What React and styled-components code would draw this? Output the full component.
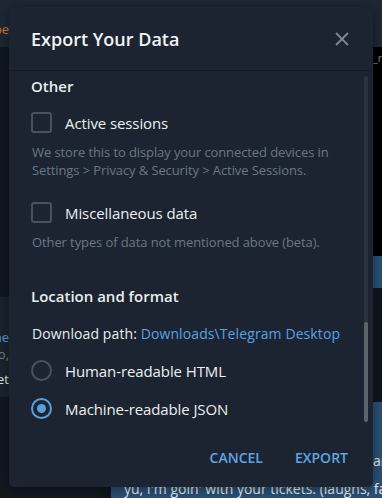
import React from "react"
import styled, { createGlobalStyle } from "styled-components"

const GlobalStyle = createGlobalStyle`
  html, body {
    margin: 0;
    padding: 0;
    background: #0f161e;
  }
  body {
    font-family: "Open Sans", "Noto Sans", sans-serif;
  }
  * {
    box-sizing: border-box;
  }
`

// Backdrop (the app behind the dialog)

const Screen = styled.div`
  position: relative;
  width: 382px;
  height: 498px;
  overflow: hidden;
  display: flex;
  flex-direction: column;
  background: #0f161e;
`

const TopBar = styled.div`
  height: 47px;
  flex-shrink: 0;
  background: #1e2834;
  display: flex;
  align-items: center;
  padding-top: 10px;
`

const Clip = styled.div`
  width: ${(p) => p.$w}px;
  flex-shrink: 0;
  display: flex;
  justify-content: ${(p) => (p.$start ? "flex-start" : "flex-end")};
  overflow: hidden;
  white-space: nowrap;
  color: ${(p) => p.$color};
  font-size: ${(p) => p.$size || 13}px;
  line-height: ${(p) => p.$lh || 18}px;
  margin-top: ${(p) => p.$top || 0}px;
  margin-left: ${(p) => (p.$push ? "auto" : "0")};
`

const Workspace = styled.div`
  flex: 1;
  display: flex;
  min-height: 0;
`

const Sidebar = styled.div`
  width: 100px;
  flex-shrink: 0;
  background: #121921;
  display: flex;
  flex-direction: column;
`

const ChatPreview = styled.div`
  margin-top: 250px;
  height: 100px;
  background: #1b2530;
  display: flex;
  flex-direction: column;
  padding-top: 32px;
`

const ChatArea = styled.div`
  flex: 1;
  display: flex;
  flex-direction: column;
  align-items: flex-end;
`

const Media = styled.div`
  width: 260px;
  height: 210px;
  background: #000;
  display: flex;
  justify-content: flex-end;
  padding-top: 4px;
`

const SmallBubble = styled.div`
  width: 200px;
  height: 32px;
  background: #2b5278;
`

const BigBubble = styled.div`
  margin-top: 114px;
  width: 271px;
  flex: 1;
  background: #2b5278;
  display: flex;
  flex-direction: column;
  padding: 50px 0 0 13px;
  color: #eef3f8;
  font-size: 14px;
`

const BubbleLine = styled.div`
  white-space: nowrap;
  overflow: hidden;
  line-height: 18px;
  margin-top: ${(p) => p.$top || 0}px;
`

// Dialog

const Dialog = styled.div`
  position: absolute;
  left: 9px;
  top: 7px;
  width: 364px;
  height: 480px;
  background: #1b2430;
  border-radius: 5px;
  box-shadow: 0 2px 14px rgba(0, 0, 0, 0.45);
  display: flex;
  flex-direction: column;
  overflow: hidden;
`

const Header = styled.div`
  height: 64px;
  flex-shrink: 0;
  display: flex;
  align-items: center;
  justify-content: space-between;
  padding: 0 22px 0 22px;
  border-bottom: 1px solid #131a23;
`

const Title = styled.h1`
  margin: 0;
  font-size: 18px;
  font-weight: 600;
  color: #f1f3f5;
  line-height: 24px;
`

const CloseButton = styled.button`
  width: 14px;
  height: 14px;
  padding: 0;
  border: none;
  background: none;
  display: flex;
  margin-right: 2px;
`

const Body = styled.div`
  flex: 1;
  position: relative;
  overflow: hidden;
  padding: 5px 22px 0 22px;
  display: flex;
  flex-direction: column;
`

const SectionTitle = styled.div`
  margin-top: ${(p) => p.$top || 0}px;
  font-size: 15px;
  font-weight: 600;
  line-height: 20px;
  color: #e9edf0;
`

const OptionRow = styled.label`
  margin-top: ${(p) => p.$top}px;
  height: 21px;
  display: flex;
  align-items: center;
  gap: 13px;
  font-size: 15px;
  letter-spacing: -0.1px;
  color: #eceff2;
`

const Box = styled.span`
  width: 21px;
  height: 21px;
  flex-shrink: 0;
  border: 2px solid #48525e;
  border-radius: 3px;
`

const Radio = styled.span`
  width: 21px;
  height: 21px;
  flex-shrink: 0;
  border-radius: 50%;
  border: 2px solid ${(p) => (p.$checked ? "#5a9fdc" : "#48525e")};
  display: flex;
  align-items: center;
  justify-content: center;

  &::after {
    content: "";
    width: 9px;
    height: 9px;
    border-radius: 50%;
    background: ${(p) => (p.$checked ? "#5a9fdc" : "transparent")};
  }
`

const Hint = styled.div`
  margin-top: 10px;
  font-size: 13px;
  letter-spacing: -0.1px;
  line-height: 18px;
  color: #6b7784;
  padding-left: 1px;
`

const PathRow = styled.div`
  margin-top: 18px;
  font-size: 14px;
  letter-spacing: 0.1px;
  line-height: 20px;
  color: #e9edf0;
  padding-left: 1px;
`

const Link = styled.span`
  color: #5aa1e6;
`

const ScrollTrack = styled.div`
  position: absolute;
  right: 5px;
  top: 5px;
  bottom: 7px;
  width: 4px;
  border-radius: 2px;
  background: #2a323c;
`

const ScrollThumb = styled.div`
  position: absolute;
  left: 0;
  right: 0;
  bottom: 0;
  height: 100px;
  border-radius: 2px;
  background: #5c636b;
`

const Footer = styled.div`
  height: 58px;
  flex-shrink: 0;
  display: flex;
  align-items: center;
  justify-content: flex-end;
  gap: 32px;
  padding-right: 25px;
`

const TextButton = styled.button`
  border: none;
  background: none;
  padding: 0;
  font-family: inherit;
  font-size: 14px;
  font-weight: 600;
  color: #5ea5e4;
  text-transform: uppercase;
  line-height: 20px;
`

const App = () => {
  return (
    <>
      <GlobalStyle />
      <Screen>
        <TopBar>
          <Clip $w={9} $color="#e07b3c">be</Clip>
        </TopBar>
        <Workspace>
          <Sidebar>
            <ChatPreview>
              <Clip $w={9} $color="#5aa1e6" $lh={17}>one</Clip>
              <Clip $w={9} $color="#7a8591" $lh={17}>so,</Clip>
              <Clip $w={9} $color="#e9edf0" $lh={17} $top={8}>Set</Clip>
            </ChatPreview>
          </Sidebar>
          <ChatArea>
            <Media>
              <Clip $w={9} $start $color="#8c8c8c" $size={11} $lh={14}>_resize</Clip>
            </Media>
            <SmallBubble />
            <BigBubble>
              <Clip $w={9} $push $start $color="#eef3f8" $size={14}>an</Clip>
              <BubbleLine $top={10}>yu, I'm goin' with your tickets. (laughs, falls asleep)</BubbleLine>
            </BigBubble>
          </ChatArea>
        </Workspace>

        <Dialog>
          <Header>
            <Title>Export Your Data</Title>
            <CloseButton aria-label="Close">
              <svg width="14" height="14" viewBox="0 0 14 14">
                <path d="M1 1L13 13M13 1L1 13" stroke="#7d8792" strokeWidth="1.8" />
              </svg>
            </CloseButton>
          </Header>
          <Body>
            <SectionTitle>Other</SectionTitle>
            <OptionRow $top={16}>
              <Box />
              Active sessions
            </OptionRow>
            <Hint>
              We store this to display your connected devices in
              <br />
              Settings &gt; Privacy &amp; Security &gt; Active Sessions.
            </Hint>
            <OptionRow $top={23}>
              <Box />
              Miscellaneous data
            </OptionRow>
            <Hint>Other types of data not mentioned above (beta).</Hint>

            <SectionTitle $top={35}>Location and format</SectionTitle>
            <PathRow>
              Download path: <Link>Downloads\Telegram Desktop</Link>
            </PathRow>
            <OptionRow $top={16}>
              <Radio />
              Human-readable HTML
            </OptionRow>
            <OptionRow $top={17}>
              <Radio $checked />
              Machine-readable JSON
            </OptionRow>

            <ScrollTrack>
              <ScrollThumb />
            </ScrollTrack>
          </Body>
          <Footer>
            <TextButton>Cancel</TextButton>
            <TextButton>Export</TextButton>
          </Footer>
        </Dialog>
      </Screen>
    </>
  )
}

export default App
